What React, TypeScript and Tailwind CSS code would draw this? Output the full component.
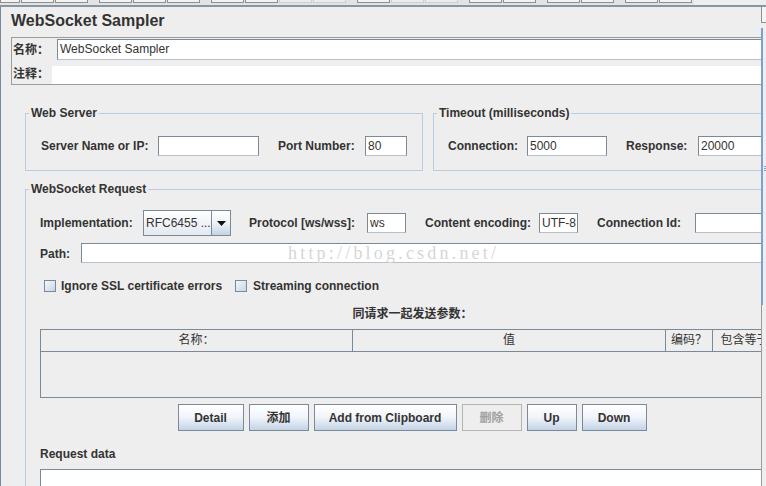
import type { ReactNode } from "react";

// top toolbar: groups of small buttons, only their bottom edges are visible
const toolbar: { w: string; light?: boolean }[][] = [
  [{ w: "w-[20px]" }, { w: "w-[33px]" }, { w: "w-[33px]" }],
  [{ w: "w-[33px]" }, { w: "w-[33px]" }, { w: "w-[33px]" }],
  [{ w: "w-[33px]" }, { w: "w-[33px]" }, { w: "w-[33px]", light: true }, { w: "w-[33px]", light: true }],
  [{ w: "w-[33px]" }, { w: "w-[33px]", light: true }, { w: "w-[33px]", light: true }],
  [{ w: "w-[33px]" }, { w: "w-[33px]" }],
  [{ w: "w-[33px]" }, { w: "w-[33px]" }],
  [{ w: "w-[33px]" }, { w: "w-[33px]" }],
];

function Label({ children, className = "" }: { children: ReactNode; className?: string }) {
  return (
    <div className={`shrink-0 whitespace-nowrap text-[12px] font-bold leading-[16px] text-[#333] ${className}`}>
      {children}
    </div>
  );
}

function Input({ value, className = "" }: { value?: string; className?: string }) {
  return (
    <div
      className={`h-[20px] shrink-0 overflow-hidden whitespace-nowrap border border-[#7a8a99] border-b-[#b7c1cb] bg-white pl-[2px] text-[12px] leading-[18px] text-[#333] ${className}`}
    >
      {value}
    </div>
  );
}

function Group({ title, className = "", children }: { title: string; className?: string; children: ReactNode }) {
  return (
    <fieldset className={`min-w-0 shrink-0 border border-[#b8cde3] ${className}`}>
      <legend className="ml-[3px] px-[2px] text-[12px] font-bold leading-[16px] text-[#333]">{title}</legend>
      {children}
    </fieldset>
  );
}

function Check({ label, className = "" }: { label: string; className?: string }) {
  return (
    <div className="flex items-center">
      <div className="h-[12px] w-[12px] shrink-0 border border-[#7a8a99] bg-linear-to-br from-[#f6f8fb] to-[#c6d5e5]" />
      <Label className={`ml-[5px] ${className}`}>{label}</Label>
    </div>
  );
}

function Btn({ children, className = "", disabled = false }: { children: ReactNode; className?: string; disabled?: boolean }) {
  return (
    <button
      type="button"
      className={`flex h-[27px] shrink-0 items-center justify-center border text-[12px] font-bold ${
        disabled
          ? "border-[#b4b4b4] bg-[#eeeeee] text-[#a0a0a0]"
          : "border-[#7a8a99] bg-linear-to-b from-white via-[#f0f4f9] to-[#c3d3e5] text-[#333]"
      } ${className}`}
    >
      {children}
    </button>
  );
}

export default function App() {
  return (
    <div className="flex h-[486px] w-[766px] flex-col overflow-hidden bg-[#eeeeee] font-['Liberation_Sans','Noto_Sans_CJK_SC',sans-serif] text-[#333]">
      {/* toolbar remnants */}
      <div className="flex h-[5px] shrink-0">
        <div className="flex h-full w-[694px] gap-[11px] bg-[#e3e3e3]">
          {toolbar.map((g, i) => (
            <div key={i} className="flex gap-[1px]">
              {g.map((b, j) => (
                <div
                  key={j}
                  className={`h-[3px] border-x border-b ${b.w} ${
                    b.light ? "border-[#cfcfcf] bg-[#ececec]" : "border-[#8e8e8e] bg-[#f2f2f2]"
                  }`}
                />
              ))}
            </div>
          ))}
        </div>
      </div>
      <div className="h-[2px] shrink-0 bg-[#8696a5]" />

      <div className="flex min-h-0 flex-1">
        {/* main panel */}
        <div className="flex w-[761px] shrink-0 flex-col overflow-hidden border-l border-[#7a8a99]">
          <div className="ml-[10px] mt-[4px] h-[20px] shrink-0 whitespace-nowrap text-[16px] font-bold leading-[20px]">
            WebSocket Sampler
          </div>

          {/* name / comment */}
          <div className="ml-[10px] mt-[6px] flex h-[48px] w-[800px] shrink-0 flex-col border border-[#9c9c9c]">
            <div className="flex h-[23px] items-center">
              <Label className="mt-[1px] w-[45px] pl-[1px]">名称：</Label>
              <Input value="WebSocket Sampler" className="h-[21px] w-[760px] leading-[19px]" />
            </div>
            <div className="flex h-[23px] items-end">
              <Label className="mb-[2px] w-[40px] pl-[1px]">注释：</Label>
              <div className="h-[18px] flex-1 bg-white" />
            </div>
          </div>

          {/* server + timeout */}
          <div className="ml-[24px] mt-[20px] flex shrink-0 gap-[10px]">
            <Group title="Web Server" className="w-[398px]">
              <div className="mb-[14px] mt-[15px] flex h-[20px] items-center pl-[15px]">
                <Label className="w-[117px]">Server Name or IP:</Label>
                <Input className="w-[101px]" />
                <Label className="ml-[19px] w-[87px]">Port Number:</Label>
                <Input value="80" className="w-[42px]" />
              </div>
            </Group>
            <Group title="Timeout (milliseconds)" className="w-[400px]">
              <div className="mb-[14px] mt-[15px] flex h-[20px] items-center pl-[14px]">
                <Label className="w-[79px]">Connection:</Label>
                <Input value="5000" className="w-[80px]" />
                <Label className="ml-[19px] w-[72px]">Response:</Label>
                <Input value="20000" className="w-[80px]" />
              </div>
            </Group>
          </div>

          {/* websocket request */}
          <Group title="WebSocket Request" className="ml-[24px] mt-[10px] w-[774px]">
            <div className="flex flex-col pl-[14px] pr-[14px] pt-[13px]">
              <div className="flex h-[26px] items-center">
                <Label className="w-[103px]">Implementation:</Label>
                <div className="flex h-[26px] w-[88px] shrink-0 border border-[#7a8a99]">
                  <div className="flex flex-1 items-center bg-linear-to-b from-white to-[#e3e9f0] pl-[2px] text-[12px] text-[#333]">
                    RFC6455 ...
                  </div>
                  <div className="flex w-[19px] items-center justify-center border-l border-[#7a8a99] bg-linear-to-b from-white via-[#eef3f8] to-[#c3d3e5]">
                    <svg width="9" height="5" viewBox="0 0 9 5">
                      <path d="M0 0h9L4.5 5z" fill="#111" />
                    </svg>
                  </div>
                </div>
                <Label className="ml-[18px] w-[118px]">Protocol [ws/wss]:</Label>
                <Input value="ws" className="w-[39px]" />
                <Label className="ml-[19px] w-[114px]">Content encoding:</Label>
                <Input value="UTF-8" className="w-[39px]" />
                <Label className="ml-[19px] w-[98px]">Connection Id:</Label>
                <Input className="w-[80px]" />
              </div>

              <div className="mt-[7px] flex h-[20px] items-center">
                <Label className="mt-[1px] w-[41px]">Path:</Label>
                <div className="relative h-[20px] w-[720px] shrink-0 border border-[#7a8a99] border-b-[#b7c1cb] bg-white">
                  <span className="absolute left-[206px] top-[-2px] whitespace-nowrap font-['Liberation_Serif',serif] text-[18px] leading-[22px] tracking-[3.2px] text-[#d6d6d6]">
                    http://blog.csdn.net/
                  </span>
                </div>
              </div>

              <div className="mt-[17px] flex h-[12px] items-center pl-[4px]">
                <Check label="Ignore SSL certificate errors" className="w-[174px]" />
                <Check label="Streaming connection" className="ml-[6px]" />
              </div>

              <div className="mt-[14px] h-[16px] shrink-0 pl-[1px] text-center text-[12px] font-bold leading-[16px]">
                同请求一起发送参数：
              </div>

              <div className="mt-[7px] flex h-[69px] w-[760px] shrink-0 flex-col border border-[#7a8a99]">
                <div className="flex h-[22px] shrink-0 border-b border-[#7a8a99] text-[12px] leading-[21px] text-[#333]">
                  <div className="w-[312px] shrink-0 border-r border-[#7a8a99] text-center">名称：</div>
                  <div className="w-[313px] shrink-0 border-r border-[#7a8a99] text-center">值</div>
                  <div className="w-[47px] shrink-0 border-r border-[#7a8a99] text-center">编码？</div>
                  <div className="w-[64px] shrink-0 border-r border-[#7a8a99] text-center">包含等于</div>
                </div>
                <div className="flex-1" />
              </div>

              <div className="mt-[6px] flex justify-center gap-[5px]">
                <Btn className="w-[66px]">Detail</Btn>
                <Btn className="w-[60px]">添加</Btn>
                <Btn className="w-[143px]">Add from Clipboard</Btn>
                <Btn className="w-[60px]" disabled>
                  删除
                </Btn>
                <Btn className="w-[50px]">Up</Btn>
                <Btn className="w-[65px]">Down</Btn>
              </div>

              <Label className="mt-[15px]">Request data</Label>
              <div className="mt-[7px] h-[100px] w-[760px] shrink-0 border border-[#7a8a99] border-b-[#b7c1cb] bg-white" />
            </div>
          </Group>
        </div>

        {/* right splitter strip */}
        <div className="flex w-[5px] shrink-0 flex-col">
          <div className="h-[16px] shrink-0 border-b border-l border-[#8e8e8e] bg-[#f4f4f4]" />
          <div className="h-[5px] shrink-0" />
          <div className="flex h-[277px] shrink-0 flex-col items-center border-l-2 border-[#7f9fd2] pt-[138px]">
            <div className="flex flex-col gap-[1px]">
              <div className="h-px w-[2px] bg-[#7f9fd2]" />
              <div className="h-px w-[2px] bg-[#7f9fd2]" />
              <div className="h-px w-[2px] bg-[#7f9fd2]" />
            </div>
          </div>
          <div className="flex-1 border-l border-[#9a9a9a]" />
        </div>
      </div>
    </div>
  );
}
